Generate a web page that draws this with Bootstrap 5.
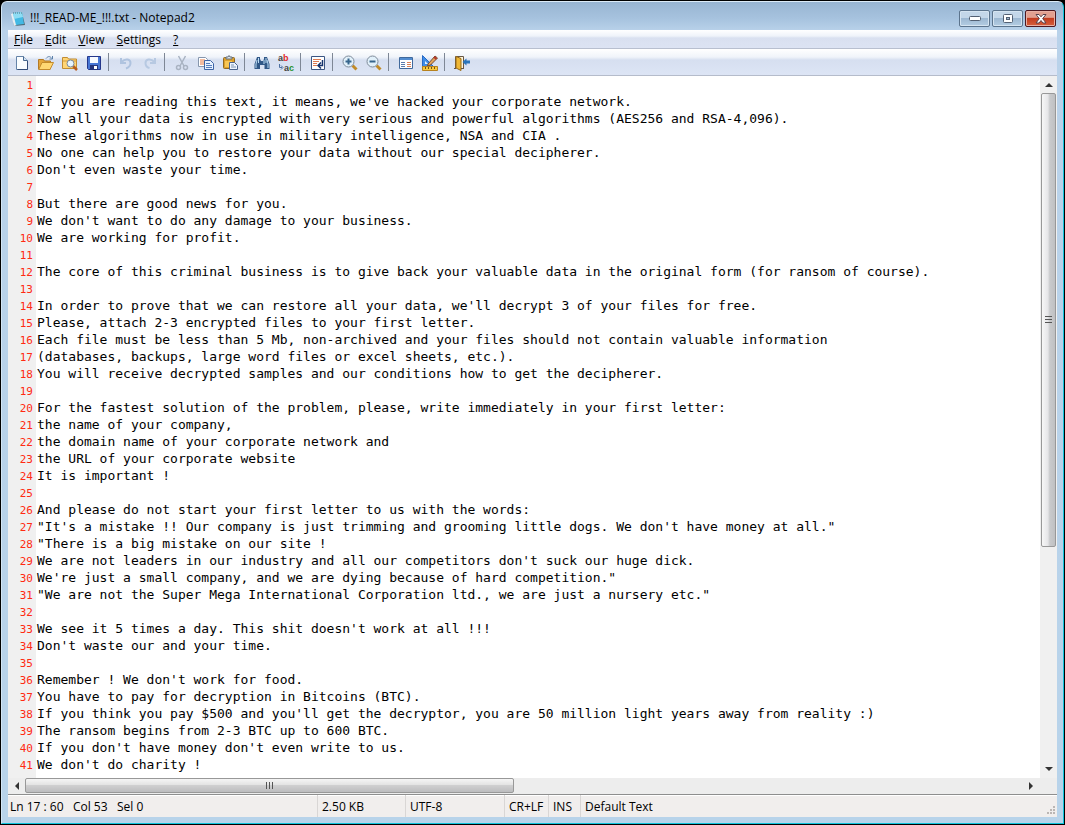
<!DOCTYPE html>
<html lang="en">
<head>
<meta charset="utf-8">
<meta name="viewport" content="width=device-width, initial-scale=1">
<title>!!!_READ-ME_!!!.txt - Notepad2</title>
<link href="https://cdn.jsdelivr.net/npm/bootstrap@5.3.0/dist/css/bootstrap.min.css" rel="stylesheet">
<style>
  body { background: #000; font: 12px/16px "Open Sans", "Noto Sans", sans-serif; color: #000; }
  .app-window {
    background: linear-gradient(#98b5d2 0, #a6c2de 16px, #b9d2ea 29px, #b8d3ea 100%);
    border: 1px solid #10c4dc; border-top-color: #dcebf7; border-left-color: #d3e6f5;
    border-radius: 6px 6px 0 0; padding: 0 6px 6px; margin: 1px;
  }
  .title-bar { height: 28px; padding: 8px 1px 0 2px; }
  .caption-btn {
    width: 31px; height: 17px; padding: 0; border: 1px solid #5c748d; border-radius: 2px;
    background: linear-gradient(#c4d7e9 0 45%, #9db8d2 50%, #b4cde3); box-shadow: inset 0 0 0 1px #d5e4f1;
  }
  .caption-group { gap: 2px; }
  .caption-close { border-color: #4d1820; background: linear-gradient(#e2a090 0 42%, #c33d20 50%, #d6603c); box-shadow: inset 0 0 0 1px #e8b0a4; }
  .menu-strip { height: 19px; background: linear-gradient(#fff 0, #eff3fa 6px, #d9e0f0 8px, #dce3f3 100%); border-bottom: 1px solid #b8bfcf; }
  .menu-strip button { border: 0; background: none; padding: 0 6px; line-height: 20px; color: #000; }
  .tool-strip { height: 27px; padding-left: 2px; background: linear-gradient(#fff 0, #f0f4fa 8px, #d6dff0 11px, #dde5f5 100%); border-bottom: 1px solid #b5bccb; }
  .tool-strip button { width: 24px; height: 24px; border: 0; padding: 0 4px; background: none; line-height: 0; margin-top: 2px; }
  .tool-sep { width: 8px; height: 18px; margin-top: 4px; border: 0; opacity: 1; background: linear-gradient(#7e8795, #7e8795) 2px 0 / 1px 100% no-repeat; }
  .edit-area { background: #fff; min-height: 0; }
  .line-numbers { width: 28px; background: #f0f0f0; color: #ff2a12; font: 11px/17px "DejaVu Sans Mono", monospace; padding: 1px 3px 0 0; white-space: pre; overflow: hidden; text-align: right; }
  .text-pane { border: 0; outline: 0; resize: none; padding: 0 0 0 1px; color: #000; background: #fff; font: 13px/17px "DejaVu Sans Mono", monospace; white-space: pre; overflow: hidden; min-width: 0; }
  .v-scroll { width: 17px; background: #f0f0f0; padding: 0 1px; }
  .h-scroll { height: 16px; background: #ededed; padding-right: 17px; }
  .v-scroll button, .h-scroll button { border: 0; padding: 0; background: none; line-height: 0; }
  .v-scroll button { height: 17px; }
  .h-scroll button { width: 17px; }
  .thumb-track { min-height: 0; min-width: 0; }
  .v-thumb { height: 68%; border: 1px solid #989898; border-radius: 2px; background: linear-gradient(90deg, #f7f7f7, #e6e6e8 45%, #c9cacc 60%, #bfc0c2); }
  .h-thumb { width: 49%; height: 15px; border: 1px solid #989898; border-radius: 2px; background: linear-gradient(#f5f5f5, #e3e3e3 45%, #cfcfd0 50%, #bcbcbe); }
  .status-strip { height: 23px; background: #f1eeed; border-top: 1px solid #8e8e8e; box-shadow: inset 0 1px #fff; }
  .status-strip span { padding: 4px 0 0 4px; border-left: 1px solid #d9d6d5; white-space: pre; overflow: hidden; flex: none; }
  .status-strip .pos-cell { width: 309px; border: 0; padding-left: 2px; }
  .size-cell { width: 88px; } .enc-cell { width: 99px; } .eol-cell { width: 44px; } .ins-cell { width: 32px; }
</style>
</head>
<body class="vh-100 d-flex overflow-hidden">
<main class="app-window flex-grow-1 d-flex flex-column overflow-hidden">
  <header class="title-bar d-flex align-items-start flex-shrink-0">
    <svg class="me-1" width="16" height="18" viewBox="0 0 16 18" aria-hidden="true"><path d="M2 4 12 3 15 15 4 16z" fill="#4b6672"/><path d="M1 4 4 16 7 15 4 3z" fill="#e7eef2"/><path d="M3 3 12 2 14 14 6 15z" fill="#42b9e4"/><path d="M3 3 12 2 13 7 4 9z" fill="#8eddf4"/><path d="M3 3h9" stroke="#507582" stroke-dasharray="1 1"/></svg>
    <div class="flex-grow-1 text-nowrap">!!!_READ-ME_!!!.txt - Notepad2</div>
    <div class="caption-group d-flex">
      <button type="button" class="caption-btn d-flex justify-content-center align-items-center" aria-label="Minimize"><svg width="12" height="6"><rect x=".5" y=".5" width="11" height="4" rx="1" fill="#fff" stroke="#536073"/></svg></button>
      <button type="button" class="caption-btn d-flex justify-content-center align-items-center" aria-label="Maximize"><svg width="12" height="10"><rect x="1.500" y=".5" width="9" height="8" rx="1" fill="#fff" stroke="#536073"/><rect x="4.500" y="3.500" width="3" height="2" fill="#9db7ce" stroke="#536073"/></svg></button>
      <button type="button" class="caption-btn caption-close d-flex justify-content-center align-items-center" aria-label="Close"><svg width="12" height="10"><path d="M1 .5h3l2 2.300 2-2.300h3L7.700 4.600 11 9H8L6 6.500 4 9H1l3.300-4.400z" fill="#fff" stroke="#58414b"/></svg></button>
    </div>
  </header>

  <nav class="menu-strip d-flex flex-shrink-0" aria-label="Menu">
    <button type="button"><u>F</u>ile</button><button type="button"><u>E</u>dit</button><button type="button"><u>V</u>iew</button><button type="button"><u>S</u>ettings</button><button type="button"><u>?</u></button>
  </nav>

  <div class="tool-strip d-flex flex-shrink-0" role="toolbar" aria-label="Toolbar">
    <button type="button" aria-label="New"><svg width="16" height="16"><path d="M2.500 1.500h7l4 4v9h-11z" fill="#fafdff" stroke="#6483a8"/><path d="M13.500 6v8.500h-10" fill="none" stroke="#344d78"/><path d="M9.500 1.500v4h4" fill="#d4e4f4" stroke="#47688f"/></svg></button>
    <button type="button" aria-label="Open"><svg width="16" height="16"><path d="M.5 14V4.500h5l1 1.500h6v8z" fill="#e5a63a" stroke="#b47a25"/><path d="M.7 14.500 4 7.500h11.500l-3.500 7z" fill="#ffd773" stroke="#c38a2c"/><path d="M8 3.500c2-2.500 4-2.500 6 0m.5-2.500v3h-3" fill="none" stroke="#5b81aa"/></svg></button>
    <button type="button" aria-label="Browse"><svg width="16" height="16"><path d="M.5 13.500v-11h5l1 1.500h8v9.500z" fill="#ffd574" stroke="#c18c32"/><path d="M1 6h13" stroke="#d39b3c"/><path d="m11 11 4 4" stroke="#b75d20" stroke-width="2.500"/><circle cx="8.500" cy="8.500" r="3.500" fill="#e6f5ff" stroke="#7b8796"/></svg></button>
    <button type="button" aria-label="Save"><svg width="16" height="16"><path d="M1.500 1.500h13v13h-12l-1-1z" fill="#4776d4" stroke="#25378b"/><path d="M4 2h8v6H4z" fill="#f7faff"/><path d="M4 10h8v5H4z" fill="#26357a"/><path d="M8 11h3v3H8z" fill="#fff"/></svg></button>
    <hr class="tool-sep">
    <button type="button" aria-label="Undo"><svg width="16" height="16"><path d="M3 3v5h5M3.500 7c4-4 9-3 9 1 0 3-2 4.500-4.500 5.500" fill="none" stroke="#afc3df" stroke-width="2"/></svg></button>
    <button type="button" aria-label="Redo"><svg width="16" height="16"><path d="M13 3v5H8m4.500-1c-4-4-9-3-9 1 0 3 2 4.500 4 5" fill="none" stroke="#b7c9e2" stroke-width="2"/></svg></button>
    <hr class="tool-sep">
    <button type="button" aria-label="Cut"><svg width="16" height="16" fill="none" stroke="#a9b3c2"><path d="m4.500 1 5.500 10M11.500 1 6 11" stroke-width="1.500"/><circle cx="4.500" cy="12.500" r="2" stroke-width="1.500"/><circle cx="11.500" cy="12.500" r="2" stroke-width="1.500"/></svg></button>
    <button type="button" aria-label="Copy"><svg width="16" height="16"><path d="M.5 2.500h7l2 2v7h-9z" fill="#fff" stroke="#8696ad"/><path d="M2 5h5M2 7h5M2 9h5" stroke="#e7773f"/><path d="M6.500 5.500h6l3 3v6h-9z" fill="#e6f1ff" stroke="#3e65a6"/><path d="M8 8.500h4M8 10.500h6M8 12.500h6" stroke="#557dbe"/></svg></button>
    <button type="button" aria-label="Paste"><svg width="16" height="16"><rect x="1.500" y="2.500" width="11" height="11" rx="1" fill="#dda02a" stroke="#8f6824"/><path d="M4 4V2h2l1-1.500L8 2h2v2z" fill="#dce2e8" stroke="#65717d"/><path d="M3 6h7v6H3z" fill="#f7c655"/><path d="M7.500 7.500h5l3 3v4h-8z" fill="#edf5ff" stroke="#4b648d"/><path d="M9 10h3M9 12h5" stroke="#7b91b1"/></svg></button>
    <hr class="tool-sep">
    <button type="button" aria-label="Find"><svg width="16" height="16"><path d="M3 2h3v2l1 2h2l1-2V2h3l1 3 1.500 4v5h-5v-4H6v4H.5V9L2 5z" fill="#315887"/><path d="M3 5 2 9v4m8-8v4m3-4 1 4v4M4.500 3v5M12 3v5" stroke="#bdddf4" fill="none"/></svg></button>
    <button type="button" aria-label="Replace"><svg class="overflow-visible" width="16" height="16" font-family="Liberation Sans, sans-serif" font-weight="bold" font-size="9"><text x="0" y="6" fill="#444">a</text><text x="5" y="6" fill="#e02b2b">b</text><text x="6" y="16" fill="#444">a</text><text x="11" y="16" fill="#27922d">c</text><path d="M1.500 9v3.500H4M3 10.500l2 2-2 2" fill="none" stroke="#4d70a0"/></svg></button>
    <hr class="tool-sep">
    <button type="button" aria-label="Word wrap"><svg width="16" height="16"><path d="M1.500 1.500h13v13h-13z" fill="#fff" stroke="#3b5683"/><path d="M3 4.500h8M3 6.500h6M3 8.500h4M3 10.500h4" stroke="#dc7a52"/><path d="M12.500 5v5.500H9m2-3-3 3 3 3" fill="none" stroke="#16346e" stroke-width="1.500"/></svg></button>
    <hr class="tool-sep">
    <button type="button" aria-label="Zoom in"><svg width="16" height="16"><path d="m10.500 10.500 4 4" stroke="#c18b28" stroke-width="3"/><circle cx="6.500" cy="6.500" r="5.500" fill="#e1f0fa" stroke="#7e8b99"/><path d="M3.500 6.500h6m-3-3v6" stroke="#36658c" stroke-width="2"/></svg></button>
    <button type="button" aria-label="Zoom out"><svg width="16" height="16"><path d="m10.500 10.500 4 4" stroke="#c18b28" stroke-width="3"/><circle cx="6.500" cy="6.500" r="5.500" fill="#e1f0fa" stroke="#7e8b99"/><path d="M3.500 6.500h6" stroke="#36658c" stroke-width="2"/></svg></button>
    <hr class="tool-sep">
    <button type="button" aria-label="Scheme"><svg width="16" height="16"><path d="M1.500 2.500h13v11h-13z" fill="#fff" stroke="#40699c"/><path d="M2 3h12v2H2z" fill="#528cd0"/><path d="M3 7.500h4M3 9.500h4M3 11.500h4" stroke="#5b7cab"/><path d="M9 7.500h4M9 9.500h4M9 11.500h4" stroke="#da8054"/></svg></button>
    <button type="button" aria-label="Customize"><svg width="16" height="16"><path d="M.5.5v11h11z" fill="#3f8ce6" stroke="#286ac5"/><path d="M3 6v3h3z" fill="#e4f1ff"/><path d="m6 9 7-8 2.500 2-7 7-3 1z" fill="#e3a55b" stroke="#744b35"/><path d="m12 2 2.500 2" stroke="#b5362a" stroke-width="2"/><path d="M.5 11.500h15v4H.5z" fill="#f8c83e" stroke="#b7821f"/><path d="M3.500 12v2m3-2v2m3-2v2m3-2v2" stroke="#765314"/></svg></button>
    <hr class="tool-sep">
    <button type="button" aria-label="Exit"><svg width="16" height="16"><path d="M1.500 13V1.500h8V13" fill="#fff7dc" stroke="#675644"/><path d="m2 1.500 5 2v12l-5-2.500z" fill="#efb735" stroke="#966817"/><path d="M0 13.500h2m5 0h3" stroke="#675644"/><path d="m8.500 7 4-3.500v2H16v3h-3.500v2z" fill="#2c75bb"/></svg></button>
  </div>

  <section class="edit-area d-flex flex-grow-1 overflow-hidden">
    <div class="line-numbers flex-shrink-0" aria-hidden="true">1
2
3
4
5
6
7
8
9
10
11
12
13
14
15
16
17
18
19
20
21
22
23
24
25
26
27
28
29
30
31
32
33
34
35
36
37
38
39
40
41</div>
    <textarea class="text-pane flex-grow-1" rows="41" spellcheck="false" aria-label="Document text">

If you are reading this text, it means, we've hacked your corporate network.
Now all your data is encrypted with very serious and powerful algorithms (AES256 and RSA-4,096).
These algorithms now in use in military intelligence, NSA and CIA .
No one can help you to restore your data without our special decipherer.
Don't even waste your time.

But there are good news for you.
We don't want to do any damage to your business.
We are working for profit.

The core of this criminal business is to give back your valuable data in the original form (for ransom of course).

In order to prove that we can restore all your data, we'll decrypt 3 of your files for free.
Please, attach 2-3 encrypted files to your first letter.
Each file must be less than 5 Mb, non-archived and your files should not contain valuable information
(databases, backups, large word files or excel sheets, etc.).
You will receive decrypted samples and our conditions how to get the decipherer.

For the fastest solution of the problem, please, write immediately in your first letter:
the name of your company,
the domain name of your corporate network and
the URL of your corporate website
It is important !

And please do not start your first letter to us with the words:
"It's a mistake !! Our company is just trimming and grooming little dogs. We don't have money at all."
"There is a big mistake on our site !
We are not leaders in our industry and all our competitors don't suck our huge dick.
We're just a small company, and we are dying because of hard competition."
"We are not the Super Mega International Corporation ltd., we are just a nursery etc."

We see it 5 times a day. This shit doesn't work at all !!!
Don't waste our and your time.

Remember ! We don't work for food.
You have to pay for decryption in Bitcoins (BTC).
If you think you pay $500 and you'll get the decryptor, you are 50 million light years away from reality :)
The ransom begins from 2-3 BTC up to 600 BTC.
If you don't have money don't even write to us.
We don't do charity !</textarea>
    <div class="v-scroll d-flex flex-column flex-shrink-0">
      <button type="button" aria-label="Scroll up"><svg width="8" height="5"><path d="M0 5 4 1l4 4z" fill="#333"/></svg></button>
      <div class="thumb-track flex-grow-1"><div class="v-thumb d-flex align-items-center justify-content-center"><svg width="7" height="8"><path d="M0 .5h7M0 3.500h7M0 6.500h7" stroke="#555"/></svg></div></div>
      <button type="button" aria-label="Scroll down"><svg width="8" height="5"><path d="M0 0h8L4 4z" fill="#333"/></svg></button>
    </div>
  </section>
  <div class="h-scroll d-flex flex-shrink-0">
    <button type="button" aria-label="Scroll left"><svg width="5" height="8"><path d="M5 0 1 4l4 4z" fill="#333"/></svg></button>
    <div class="thumb-track flex-grow-1"><div class="h-thumb d-flex align-items-center justify-content-center"><svg width="8" height="7"><path d="M.5 0v7M3.500 0v7M6.500 0v7" stroke="#555"/></svg></div></div>
    <button type="button" aria-label="Scroll right"><svg width="5" height="8"><path d="m0 0 4 4-4 4z" fill="#333"/></svg></button>
  </div>
  <footer class="status-strip d-flex flex-shrink-0">
    <span class="pos-cell">Ln 17 : 60   Col 53   Sel 0</span><span class="size-cell">2.50 KB</span><span class="enc-cell">UTF-8</span><span class="eol-cell">CR+LF</span><span class="ins-cell">INS</span><span>Default Text</span>
    <svg class="ms-auto align-self-end" width="12" height="12" aria-hidden="true" fill="#bbb6b4"><path d="M8 1h2v2H8zM5 4h2v2H5zM8 4h2v2H8zM2 7h2v2H2zM5 7h2v2H5zM8 7h2v2H8z"/></svg>
  </footer>
</main>
<script src="https://cdn.jsdelivr.net/npm/bootstrap@5.3.0/dist/js/bootstrap.bundle.min.js"></script>
</body>
</html>
